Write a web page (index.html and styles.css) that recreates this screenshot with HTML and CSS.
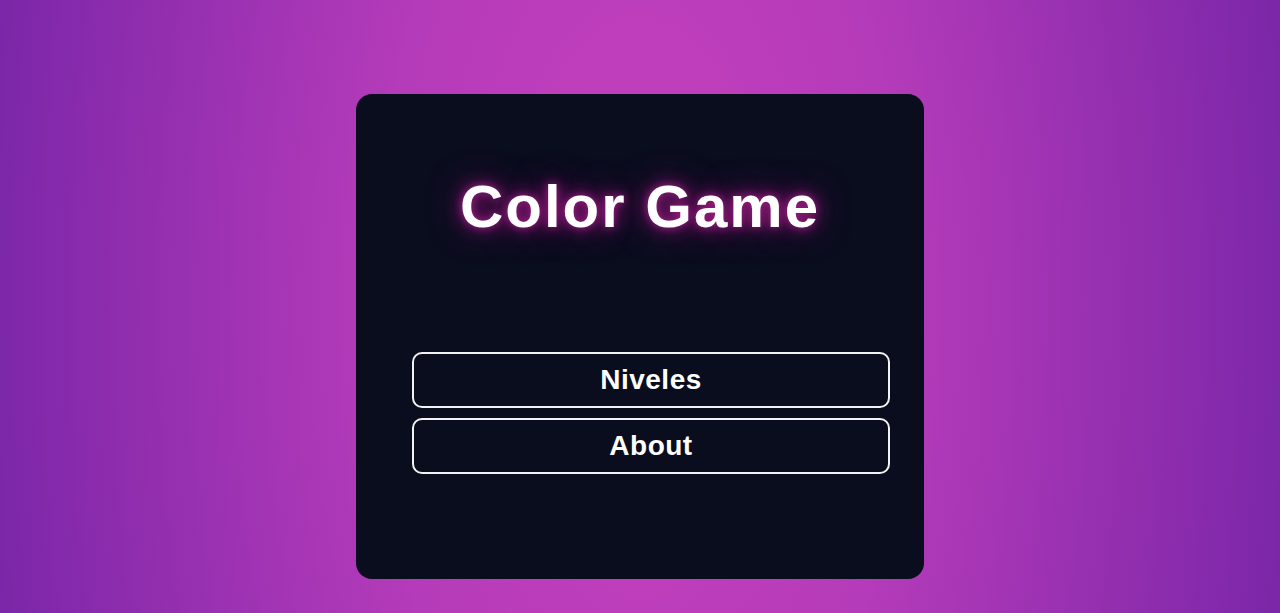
FILE: index.html
```html
<!DOCTYPE html>
<html>
<head>
    <meta charset="utf-8">
    <title>Color Game</title>
    <link rel="stylesheet" href="styles.css">
</head>
<body>

    <div class="card">
        <h1 class="title">Color Game</h1>
        <div class="menu">
            <button class="btn" id="levelsBtn">Niveles</button>
            <button class="btn" id="aboutBtn">About</button>
        </div>
    </div>

</body>
</html>
```

FILE: styles.css
```css
html,body{
    margin: 0;
    padding: 0;
    height: 100%;
}
body{
    background: radial-gradient(ellipse 660px 1400px at 50% 50%, #c740be 0%, #b43bb9 40%, #7a26a8 100%);
    background-color: #9a2fb0;
    font-family: "Liberation Sans", Arial, sans-serif;
    overflow: hidden;
}
.card{
    width: 568px;
    height: 485px;
    box-sizing: border-box;
    margin: 94px auto 0;
    padding: 83px 34px 0 56px;
    background-color: #0a0d1e;
    border-radius: 16px;
}
.title{
    margin: 0 0 115px -22px;
    font-size: 60px;
    line-height: 60px;
    font-weight: bold;
    letter-spacing: 2px;
    text-align: center;
    color: #fff;
    text-shadow: 0 0 8px rgba(200, 40, 160, 0.7), 0 0 18px rgba(170, 25, 140, 0.8), 0 0 34px rgba(130, 15, 110, 0.8);
}
.menu{
    display: flex;
    flex-direction: column;
    gap: 10px;
}
.btn{
    height: 56px;
    margin: 0;
    padding: 0;
    border: solid 2px #f2f2f2;
    border-radius: 10px;
    background-color: transparent;
    color: #fff;
    font-family: "Liberation Sans", Arial, sans-serif;
    font-size: 28px;
    font-weight: bold;
    letter-spacing: 0.5px;
    cursor: pointer;
}
```
